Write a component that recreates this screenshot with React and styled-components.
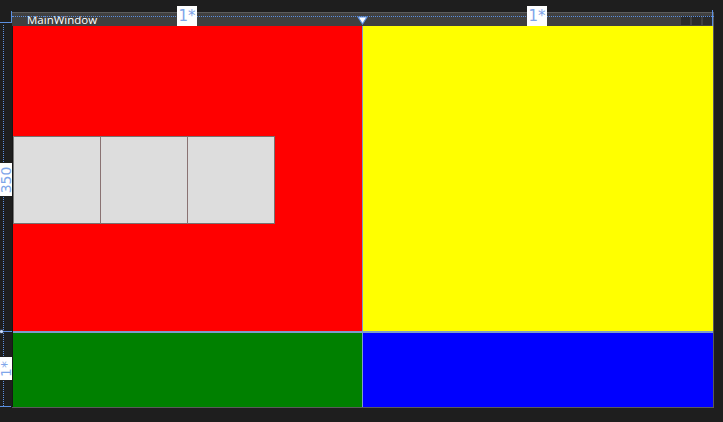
import React from 'react';
import styled, { createGlobalStyle } from 'styled-components';

const GlobalStyle = createGlobalStyle`
  html, body {
    margin: 0;
    padding: 0;
    background: #1e1e1e;
    font-family: "Open Sans", "Liberation Sans", sans-serif;
  }
`;

const Canvas = styled.div`
  position: relative;
  width: 723px;
  height: 422px;
  padding: 12px 0 0 12px;
  box-sizing: border-box;
  overflow: hidden;
`;

const Window = styled.div`
  width: 702px;
  height: 396px;
  display: flex;
  flex-direction: column;
  border-right: 1px solid #5a5a5a;
  border-bottom: 1px solid #5a5a5a;
  box-sizing: border-box;
`;

const TitleBar = styled.div`
  height: 14px;
  background: #404040;
  border-top: 1px solid #5c5c5c;
  box-sizing: border-box;
  display: flex;
  align-items: center;
  padding: 0 1px 0 15px;
`;

const Title = styled.span`
  flex: 1;
  color: #ffffff;
  font-size: 11.5px;
  line-height: 12px;
  margin-top: 1px;
`;

const WinButtons = styled.div`
  display: flex;
  gap: 2px;
  margin-top: 2px;
`;

const WinButton = styled.span`
  width: 9px;
  height: 9px;
  background: #2b2b2b;
`;

const Grid = styled.div`
  flex: 1;
  display: grid;
  grid-template-columns: 349px 350px;
  grid-template-rows: 305px 1fr;
  column-gap: 1px;
  row-gap: 2px;
  background: #7d9cc9;
  border-left: 1px solid #161616;
`;

const Cell = styled.div`
  background: ${p => p.color};
  display: flex;
  align-items: center;
`;

const ButtonRow = styled.div`
  display: flex;
  margin-top: 2px;
`;

const GrayButton = styled.div`
  width: 88px;
  height: 88px;
  background: #dddddd;
  border: 1px solid #787070;
  border-left-color: ${p => (p.first ? '#777777' : '#8a7272')};
  box-sizing: border-box;
  margin-left: ${p => (p.first ? 0 : '-1px')};
`;

/* designer adorners layered over the window */
const Adorner = styled.div`
  position: absolute;
  pointer-events: none;
`;

const HDots = styled(Adorner)`
  left: 12px;
  top: 16px;
  width: 702px;
  border-top: 1px dotted #5b8fe0;
`;

const VDots = styled(Adorner)`
  left: 3px;
  top: 25px;
  height: 381px;
  border-left: 1px dotted #5b8fe0;
`;

const Line = styled(Adorner)`
  background: #5b8fe0;
`;

const Label = styled(Adorner)`
  background: #ffffff;
  color: #7ea6ea;
  font-size: 15px;
  line-height: 20px;
  display: flex;
  align-items: center;
  justify-content: center;
  font-family: "DejaVu Sans", "Liberation Sans", sans-serif;
`;

const SideLabel = styled(Label)`
  width: 12px;
  & > span {
    display: block;
    transform: rotate(-90deg);
    white-space: nowrap;
    font-size: 14px;
  }
`;

const Dot = styled(Adorner)`
  width: 3px;
  height: 3px;
  border-radius: 50%;
  background: #cfe0ff;
  box-shadow: 0 0 2px #8fb6ff;
`;

const Marker = () => (
  <Adorner style={{ left: 357, top: 8 }}>
    <svg width="11" height="9" viewBox="0 0 11 9">
      <path d="M1 1 H10 L5.5 8 Z" fill="#ffffff" stroke="#5b8fe0" strokeWidth="1.2" />
    </svg>
  </Adorner>
);

export default function App() {
  return (
    <>
      <GlobalStyle />
      <Canvas>
        <Window>
          <TitleBar>
            <Title>MainWindow</Title>
            <WinButtons>
              <WinButton />
              <WinButton />
              <WinButton />
            </WinButtons>
          </TitleBar>
          <Grid>
            <Cell color="#ff0000">
              <ButtonRow>
                <GrayButton first />
                <GrayButton />
                <GrayButton />
              </ButtonRow>
            </Cell>
            <Cell color="#ffff00" />
            <Cell color="#008000" />
            <Cell color="#0000ff" />
          </Grid>
        </Window>

        <HDots />
        <VDots />
        <Line style={{ left: 0, top: 22, width: 12, height: 1 }} />
        <Line style={{ left: 11, top: 11, width: 1, height: 12 }} />
        <Line style={{ left: 712, top: 10, width: 1, height: 16 }} />
        <Line style={{ left: 0, top: 331, width: 12, height: 1 }} />
        <Line style={{ left: 0, top: 406, width: 11, height: 1 }} />
        <Dot style={{ left: 0, top: 330 }} />
        <Marker />

        <Label style={{ left: 177, top: 6, width: 20, height: 20 }}>1*</Label>
        <Label style={{ left: 527, top: 6, width: 20, height: 20 }}>1*</Label>
        <SideLabel style={{ left: 0, top: 163, height: 33 }}><span>350</span></SideLabel>
        <SideLabel style={{ left: 0, top: 357, height: 23 }}><span>1*</span></SideLabel>
      </Canvas>
    </>
  );
}
